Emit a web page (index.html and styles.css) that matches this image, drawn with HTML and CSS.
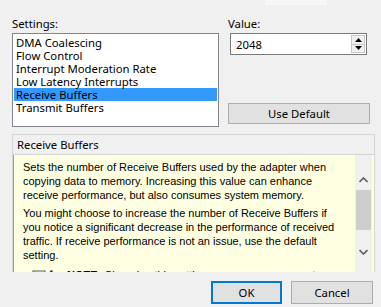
FILE: index.html
```html
<!DOCTYPE html>
<html>
<head>
<meta charset="utf-8">
<link rel="stylesheet" href="styles.css">
</head>
<body>
<div class="dialog">
  <div class="strip"></div>
  <div class="top">
    <div class="settings">
      <div class="label">Settings:</div>
      <ul class="list">
        <li>DMA Coalescing</li>
        <li>Flow Control</li>
        <li>Interrupt Moderation Rate</li>
        <li>Low Latency Interrupts</li>
        <li class="sel">Receive Buffers</li>
        <li>Transmit Buffers</li>
      </ul>
    </div>
    <div class="value">
      <div class="label">Value:</div>
      <div class="spin">
        <span class="spin-text">2048</span>
        <div class="spin-btns">
          <div class="spin-btn"><svg width="7" height="4" viewBox="0 0 7 4"><path d="M3.5 0 L7 4 L0 4 Z" fill="#000"/></svg></div>
          <div class="spin-btn"><svg width="7" height="4" viewBox="0 0 7 4"><path d="M0 0 L7 0 L3.5 4 Z" fill="#000"/></svg></div>
        </div>
      </div>
      <button class="btn default">Use Default</button>
    </div>
  </div>
  <div class="help">
    <div class="help-head">Receive Buffers</div>
    <div class="help-body">
      <div class="help-text">
        <p>Sets the number of Receive Buffers used by the adapter when copying data to memory. Increasing this value can enhance receive performance, but also consumes system memory.</p>
        <p>You might choose to increase the number of Receive Buffers if you notice a significant decrease in the performance of received traffic. If receive performance is not an issue, use the default setting.</p>
        <div class="note">
          <svg class="note-icon" width="24" height="16" viewBox="0 0 24 16"><rect x="2" y="3" width="12" height="10" fill="none" stroke="#555" stroke-width="1"/><line x1="4" y1="6" x2="12" y2="6" stroke="#777"/><path d="M13 12 L20 2 L22 3 L15 13 Z" fill="#333"/></svg>
          <span><b>NOTE:</b> Changing this setting may cause a momentary loss of connectivity.</span>
        </div>
      </div>
      <div class="scrollbar">
        <div class="sb-arrow"><svg width="9" height="6" viewBox="0 0 9 6"><path d="M0.5 5 L4.5 1 L8.5 5" fill="none" stroke="#606060" stroke-width="1.6"/></svg></div>
        <div class="sb-thumb"></div>
        <div class="sb-arrow"><svg width="9" height="6" viewBox="0 0 9 6"><path d="M0.5 1 L4.5 5 L8.5 1" fill="none" stroke="#606060" stroke-width="1.6"/></svg></div>
      </div>
    </div>
  </div>
  <div class="footer">
    <button class="btn ok">OK</button>
    <button class="btn cancel">Cancel</button>
  </div>
</div>
</body>
</html>
```
FILE: styles.css
```css
* { box-sizing: border-box; }
html, body { margin: 0; padding: 0; }
body {
  background: #f0f0f0;
  font-family: "Noto Sans", "Open Sans", sans-serif;
  font-size: 11.3px;
  color: #000;
  width: 381px;
  height: 307px;
  overflow: hidden;
}
.dialog {
  display: flex;
  flex-direction: column;
  height: 307px;
}
.strip {
  height: 5px;
  width: 62px;
  margin-left: 265px;
  background: #f7f7f7;
  flex: none;
}
.top {
  display: flex;
  padding: 11px 0 0 12px;
  height: 129px;
  flex: none;
}
.label {
  height: 15px;
  line-height: 15px;
  margin-bottom: 2px;
  color: #000;
}
.settings { width: 207px; }
.list {
  list-style: none;
  margin: 0;
  padding: 2px 1px;
  height: 94px;
  background: #fff;
  border: 1px solid #828790;
}
.list li {
  height: 13px;
  line-height: 13px;
  padding-left: 2px;
  white-space: nowrap;
}
.list li.sel { background: #3399ff; }
.value {
  margin-left: 9px;
  width: 143px;
  display: flex;
  flex-direction: column;
}
.spin {
  margin-left: 2px;
  width: 137px;
  height: 22px;
  border: 1px solid #7a7a7a;
  background: #fff;
  display: flex;
  align-items: center;
  padding: 0 1px 0 5px;
}
.spin-text { flex: 1; }
.spin-btns {
  display: flex;
  flex-direction: column;
  width: 14px;
  height: 18px;
}
.spin-btn {
  flex: 1;
  display: flex;
  align-items: center;
  justify-content: center;
  background: #f0f0f0;
  border: 1px solid #c8c8c8;
}
.spin-btn + .spin-btn { border-top: none; }
.btn {
  font-family: inherit;
  font-size: 11.3px;
  color: #000;
  background: #e1e1e1;
  border: 1px solid #adadad;
  padding: 0;
  margin: 0;
}
.default {
  margin-top: 48px;
  width: 142px;
  height: 21px;
}
.help {
  margin-left: 12px;
  width: 363px;
  height: 138px;
  border: 1px solid #d5d5d5;
  border-bottom: none;
  display: flex;
  flex-direction: column;
  overflow: hidden;
  flex: none;
}
.help-head {
  height: 20px;
  line-height: 19px;
  padding-left: 4px;
  border-bottom: 1px solid #d5d5d5;
  background: #f0f0f0;
  flex: none;
}
.help-body {
  display: flex;
  flex: 1;
  min-height: 0;
  background: #ffffe1;
  border-left: 1px solid #a0a0a0;
  overflow: hidden;
}
.help-text {
  flex: 1;
  padding: 5px 10px 0 9px;
  font-family: "Liberation Sans", Arial, sans-serif;
  font-size: 11px;
  line-height: 14px;
}
.help-text p { margin: 0 0 4px 0; }
.note {
  display: flex;
  align-items: flex-start;
  padding-left: 8px;
  margin-top: 6px;
}
.note-icon { flex: none; margin-right: 12px; }
.scrollbar {
  width: 17px;
  display: flex;
  flex-direction: column;
  background: #f0f0f0;
  flex: none;
  margin-right: 2px;
  padding-top: 16px;
}
.sb-arrow {
  height: 17px;
  display: flex;
  align-items: center;
  justify-content: center;
  flex: none;
}
.sb-thumb { height: 40px; background: #cdcdcd; margin: 2px 1px 13px 1px; flex: none; }
.footer {
  display: flex;
  justify-content: flex-end;
  gap: 9px;
  padding: 9px 8px 0 0;
}
.ok {
  width: 71px;
  height: 23px;
  border: 2px solid #0078d7;
}
.cancel {
  width: 82px;
  height: 23px;
}
```
